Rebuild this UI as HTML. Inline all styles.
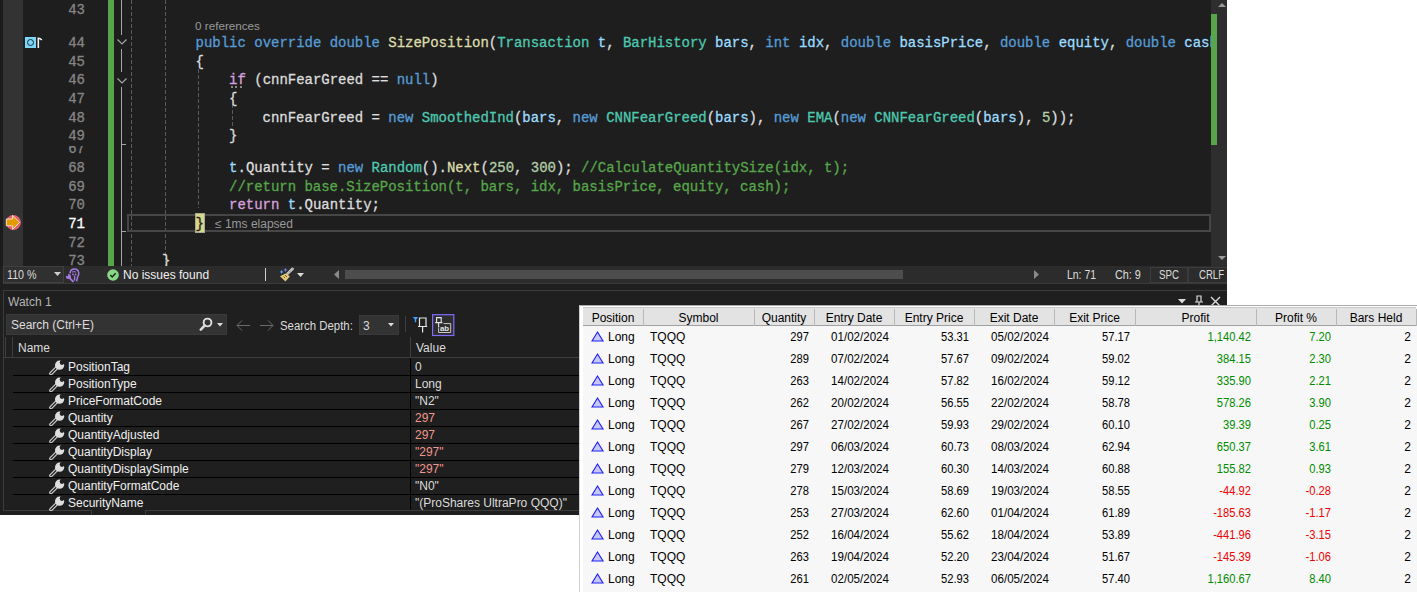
<!DOCTYPE html>
<html><head><meta charset="utf-8"><style>
*{margin:0;padding:0;box-sizing:border-box}
html,body{width:1417px;height:592px;overflow:hidden;background:#fff;position:relative}
.a{position:absolute}
.mono{font-family:"Liberation Mono",monospace;font-size:14px;letter-spacing:-0.025px;white-space:pre;line-height:18px;-webkit-text-stroke:0.3px currentColor}
.ui{font-family:"Liberation Sans",sans-serif;font-size:12px;white-space:pre;line-height:14px}
</style></head><body>

<div class="a" style="left:0;top:0;width:1227px;height:515px;background:#1f1f1f"></div>
<div class="a" style="left:0;top:0;width:1211px;height:266px;background:#1e1e1e;overflow:hidden">
<div class="a" style="left:0;top:0;width:3px;height:266px;background:#1b1b1b"></div>
<div class="a" style="left:3px;top:0;width:20px;height:266px;background:#333333"></div>
<div class="a" style="left:108px;top:0;width:6px;height:266px;background:#57a64a"></div>
<div class="a" style="left:121px;top:0px;width:1px;height:35px;background:#a5a5a5"></div>
<div class="a" style="left:121px;top:49px;width:1px;height:23px;background:#a5a5a5"></div>
<div class="a" style="left:121px;top:87px;width:1px;height:179px;background:#a5a5a5"></div>
<div class="a" style="left:121px;top:144px;width:5px;height:1px;background:#a5a5a5"></div>
<div class="a" style="left:121px;top:231px;width:5px;height:1px;background:#a5a5a5"></div>
<svg class="a" style="left:116px;top:38px" width="12" height="8"><path d="M1.5 1.5 L6 6 L10.5 1.5" stroke="#a5a5a5" stroke-width="1.2" fill="none"/></svg>
<svg class="a" style="left:116px;top:77px" width="12" height="8"><path d="M1.5 1.5 L6 6 L10.5 1.5" stroke="#a5a5a5" stroke-width="1.2" fill="none"/></svg>
<div class="a" style="left:131px;top:0px;width:1px;height:266px;background:repeating-linear-gradient(to bottom,#5a5a5a 0 4px,transparent 4px 6px)"></div>
<div class="a" style="left:165px;top:0px;width:1px;height:266px;background:repeating-linear-gradient(to bottom,#5a5a5a 0 4px,transparent 4px 6px)"></div>
<div class="a" style="left:198px;top:69px;width:1px;height:78px;background:repeating-linear-gradient(to bottom,#5a5a5a 0 4px,transparent 4px 6px)"></div>
<div class="a" style="left:198px;top:147px;width:1px;height:61px;background:repeating-linear-gradient(to bottom,#5a5a5a 0 4px,transparent 4px 6px)"></div>
<div class="a" style="left:232px;top:104px;width:1px;height:24px;background:repeating-linear-gradient(to bottom,#5a5a5a 0 4px,transparent 4px 6px)"></div>
<div class="a mono" style="left:0;width:85px;text-align:right;top:1px;color:#858585;font-weight:normal">43</div>
<div class="a mono" style="left:0;width:85px;text-align:right;top:34.0px;color:#858585;font-weight:normal">44</div>
<div class="a mono" style="left:0;width:85px;text-align:right;top:52.67px;color:#858585;font-weight:normal">45</div>
<div class="a mono" style="left:0;width:85px;text-align:right;top:71.34px;color:#858585;font-weight:normal">46</div>
<div class="a mono" style="left:0;width:85px;text-align:right;top:90.01px;color:#858585;font-weight:normal">47</div>
<div class="a mono" style="left:0;width:85px;text-align:right;top:108.68px;color:#858585;font-weight:normal">48</div>
<div class="a mono" style="left:0;width:85px;text-align:right;top:127.35000000000002px;color:#858585;font-weight:normal">49</div>
<div class="a" style="left:0;top:146px;width:100px;height:20px;overflow:hidden"><div class="a mono" style="left:0;width:85px;text-align:right;top:-5.670000000000016px;color:#858585">67</div></div>
<div class="a mono" style="left:0;width:85px;text-align:right;top:159.0px;color:#858585;font-weight:normal">68</div>
<div class="a mono" style="left:0;width:85px;text-align:right;top:177.67000000000002px;color:#858585;font-weight:normal">69</div>
<div class="a mono" style="left:0;width:85px;text-align:right;top:196.34px;color:#858585;font-weight:normal">70</div>
<div class="a mono" style="left:0;width:85px;text-align:right;top:215.01px;color:#FFFFFF;font-weight:normal">71</div>
<div class="a mono" style="left:0;width:85px;text-align:right;top:233.68px;color:#858585;font-weight:normal">72</div>
<div class="a mono" style="left:0;width:85px;text-align:right;top:252.35000000000002px;color:#858585;font-weight:normal">73</div>
<div class="a" style="left:23px;top:0;width:1188px;height:147px;background:transparent"></div>
<div class="a ui" style="left:195px;top:19px;color:#999999;font-size:11.7px">0 references</div>
<div class="a mono" style="left:195.6px;top:34.0px"><span style="color:#569CD6">public</span><span style="color:#DCDCDC"> </span><span style="color:#569CD6">override</span><span style="color:#DCDCDC"> </span><span style="color:#569CD6">double</span><span style="color:#DCDCDC"> </span><span style="color:#DCDCAA">SizePosition</span><span style="color:#DCDCDC">(</span><span style="color:#4EC9B0">Transaction</span><span style="color:#DCDCDC"> </span><span style="color:#9CDCFE">t</span><span style="color:#DCDCDC">, </span><span style="color:#4EC9B0">BarHistory</span><span style="color:#DCDCDC"> </span><span style="color:#9CDCFE">bars</span><span style="color:#DCDCDC">, </span><span style="color:#569CD6">int</span><span style="color:#DCDCDC"> </span><span style="color:#9CDCFE">idx</span><span style="color:#DCDCDC">, </span><span style="color:#569CD6">double</span><span style="color:#DCDCDC"> </span><span style="color:#9CDCFE">basisPrice</span><span style="color:#DCDCDC">, </span><span style="color:#569CD6">double</span><span style="color:#DCDCDC"> </span><span style="color:#9CDCFE">equity</span><span style="color:#DCDCDC">, </span><span style="color:#569CD6">double</span><span style="color:#DCDCDC"> </span><span style="color:#9CDCFE">cash</span></div>
<div class="a mono" style="left:195.6px;top:52.67px"><span style="color:#DCDCDC">{</span></div>
<div class="a mono" style="left:229.1px;top:71.34px"><span style="color:#D8A0DF">if</span><span style="color:#DCDCDC"> (</span><span style="color:#DCDCDC">cnnFearGreed</span><span style="color:#DCDCDC"> == </span><span style="color:#569CD6">null</span><span style="color:#DCDCDC">)</span></div>
<div class="a mono" style="left:229.1px;top:90.01px"><span style="color:#DCDCDC">{</span></div>
<div class="a mono" style="left:262.6px;top:108.68px"><span style="color:#DCDCDC">cnnFearGreed</span><span style="color:#DCDCDC"> = </span><span style="color:#569CD6">new</span><span style="color:#DCDCDC"> </span><span style="color:#4EC9B0">SmoothedInd</span><span style="color:#DCDCDC">(</span><span style="color:#9CDCFE">bars</span><span style="color:#DCDCDC">, </span><span style="color:#569CD6">new</span><span style="color:#DCDCDC"> </span><span style="color:#4EC9B0">CNNFearGreed</span><span style="color:#DCDCDC">(</span><span style="color:#9CDCFE">bars</span><span style="color:#DCDCDC">), </span><span style="color:#569CD6">new</span><span style="color:#DCDCDC"> </span><span style="color:#4EC9B0">EMA</span><span style="color:#DCDCDC">(</span><span style="color:#569CD6">new</span><span style="color:#DCDCDC"> </span><span style="color:#4EC9B0">CNNFearGreed</span><span style="color:#DCDCDC">(</span><span style="color:#9CDCFE">bars</span><span style="color:#DCDCDC">), </span><span style="color:#B5CEA8">5</span><span style="color:#DCDCDC">));</span></div>
<div class="a mono" style="left:229.1px;top:127.35000000000002px"><span style="color:#DCDCDC">}</span></div>
<div class="a mono" style="left:229.1px;top:159.0px"><span style="color:#9CDCFE">t</span><span style="color:#DCDCDC">.</span><span style="color:#DCDCDC">Quantity</span><span style="color:#DCDCDC"> = </span><span style="color:#569CD6">new</span><span style="color:#DCDCDC"> </span><span style="color:#4EC9B0">Random</span><span style="color:#DCDCDC">().</span><span style="color:#DCDCAA">Next</span><span style="color:#DCDCDC">(</span><span style="color:#B5CEA8">250</span><span style="color:#DCDCDC">, </span><span style="color:#B5CEA8">300</span><span style="color:#DCDCDC">); </span><span style="color:#57A64A">//CalculateQuantitySize(idx, t);</span></div>
<div class="a mono" style="left:229.1px;top:177.67000000000002px"><span style="color:#57A64A">//return base.SizePosition(t, bars, idx, basisPrice, equity, cash);</span></div>
<div class="a mono" style="left:229.1px;top:196.34px"><span style="color:#D8A0DF">return</span><span style="color:#DCDCDC"> </span><span style="color:#9CDCFE">t</span><span style="color:#DCDCDC">.</span><span style="color:#DCDCDC">Quantity</span><span style="color:#DCDCDC">;</span></div>
<div class="a mono" style="left:162.1px;top:252.35000000000002px"><span style="color:#DCDCDC">}</span></div>
<div class="a" style="left:230.5px;top:86px;width:2px;height:2px;background:#8a8a8a"></div>
<div class="a" style="left:235px;top:86px;width:2px;height:2px;background:#8a8a8a"></div>
<div class="a" style="left:239.5px;top:86px;width:2px;height:2px;background:#8a8a8a"></div>
<div class="a" style="left:127px;top:213.5px;width:1084px;height:18.5px;border:2px solid #464646"></div>
<div class="a" style="left:195px;top:213px;width:9.5px;height:20px;background:#d6d68c;border:1px solid #a9a996"></div>
<div class="a mono" style="left:195.6px;top:215.01px;color:#1e1e1e">}</div>
<div class="a ui" style="left:215px;top:216.5px;color:#999999">≤ 1ms elapsed</div>
<div class="a" style="left:25px;top:37px;width:11px;height:11px;background:#7dd6fa"></div>
<div class="a" style="left:26.6px;top:38.9px;width:7px;height:7px;border:1.1px solid #1a2a30;border-radius:50%"></div>
<svg class="a" style="left:36px;top:36px" width="7" height="13"><path d="M2.3 12 V2.2 Q4 2 5.8 4" stroke="#f0f0f0" stroke-width="1.6" fill="none"/></svg>
<svg class="a" style="left:5px;top:214px" width="17" height="17"><circle cx="8.4" cy="8.5" r="7.5" fill="#e2606e"/><path d="M1.3 5 H7.6 V1.4 L14.6 8.4 L7.6 15.4 V11.8 H1.3 Z" fill="#e29c00" stroke="#f4e4e4" stroke-width="0.9"/></svg>
</div>
<div class="a" style="left:1211px;top:0;width:16px;height:266px;background:#2e2e2e"></div>
<div class="a" style="left:1211px;top:14px;width:6px;height:131px;background:#57a64a"></div>
<svg class="a" style="left:1217px;top:1px" width="10" height="8"><path d="M1 6 L5 2 L9 6 Z" fill="#999"/></svg>
<svg class="a" style="left:1217px;top:254px" width="10" height="8"><path d="M1 2 L5 6 L9 2 Z" fill="#999"/></svg>
<div class="a" style="left:3px;top:266px;width:1224px;height:18px;background:#2c2c2c"></div>
<div class="a" style="left:3px;top:266px;width:61px;height:17px;background:#303030;border:1px solid #404040"></div>
<div class="a ui" style="left:7px;top:268px;color:#dcdcdc;transform:scaleX(0.89);transform-origin:0 0">110 %</div>
<svg class="a" style="left:54px;top:272px" width="8" height="5"><path d="M0 0 H7 L3.5 4 Z" fill="#cfcfcf"/></svg>
<svg class="a" style="left:65px;top:267px" width="16" height="16"><path d="M5.2 6.5 Q5 2.6 9 2.1 Q13 1.9 13.7 5.6 Q14 8 12.6 10 L11.6 14.4" stroke="#a67be6" stroke-width="1.5" fill="none"/><path d="M7 5.2 Q9 3.9 11 5.2" stroke="#a67be6" stroke-width="1" fill="none"/><circle cx="8" cy="7.4" r="0.9" fill="#a67be6"/><circle cx="10.6" cy="7.4" r="0.9" fill="#a67be6"/><path d="M9.6 8.6 V13.6" stroke="#a67be6" stroke-width="1.4"/><circle cx="3.4" cy="9.6" r="2.5" fill="#a67be6"/><circle cx="2.1" cy="8.2" r="1.1" fill="#2c2c2c"/><path d="M4.2 10.6 L8 14.4" stroke="#a67be6" stroke-width="1.9" stroke-linecap="round"/></svg>
<svg class="a" style="left:107px;top:269px" width="12" height="12"><circle cx="6" cy="6" r="5.8" fill="#87d787"/><path d="M3.3 6 L5.2 7.9 L8.7 4.2" stroke="#1e1e1e" stroke-width="1.4" fill="none"/></svg>
<div class="a ui" style="left:123px;top:268px;color:#f0f0f0">No issues found</div>
<div class="a" style="left:265px;top:268px;width:1px;height:13px;background:#cfcfcf"></div>
<svg class="a" style="left:278px;top:266px" width="18" height="17"><path d="M14.6 2.8 L9.6 7.6" stroke="#cfcfcf" stroke-width="2.6" stroke-linecap="round"/><path d="M14.6 2.8 L9.6 7.6" stroke="#555" stroke-width="0.8" stroke-dasharray="1 1"/><path d="M8.2 7.2 L11.8 10.6 L7.4 15.4 L2 10.2 Z" fill="#e6c87c"/><path d="M5.5 10.5 L7 12 M7 9 L9 11" stroke="#6a5a30" stroke-width="1"/><path d="M3.6 3.8 L4.3 5.2 L5.7 5.9 L4.3 6.6 L3.6 8 L2.9 6.6 L1.5 5.9 L2.9 5.2 Z" fill="#4fa8f0"/><path d="M7.4 1.8 L8.1 3.2 L9.5 3.9 L8.1 4.6 L7.4 6 L6.7 4.6 L5.3 3.9 L6.7 3.2 Z" fill="#7a78e0"/></svg>
<svg class="a" style="left:297px;top:273px" width="8" height="5"><path d="M0 0 H7 L3.5 4 Z" fill="#dcdcdc"/></svg>
<svg class="a" style="left:334px;top:270px" width="6" height="10"><path d="M5 0 V9 L0 4.5 Z" fill="#8a8a8a"/></svg>
<div class="a" style="left:345px;top:270px;width:558px;height:9px;background:#4d4d4d"></div>
<svg class="a" style="left:1034px;top:270px" width="6" height="10"><path d="M0 0 V9 L5 4.5 Z" fill="#8a8a8a"/></svg>
<div class="a ui" style="left:1067px;top:268px;color:#dcdcdc;transform:scaleX(0.87);transform-origin:0 0">Ln: 71</div>
<div class="a ui" style="left:1115px;top:268px;color:#dcdcdc;transform:scaleX(0.9);transform-origin:0 0">Ch: 9</div>
<div class="a" style="left:1150px;top:267px;width:38px;height:16px;border:1px solid #3c3c3c"></div>
<div class="a ui" style="left:1159px;top:268px;color:#dcdcdc;transform:scaleX(0.81);transform-origin:0 0">SPC</div>
<div class="a" style="left:1188px;top:267px;width:39px;height:16px;border:1px solid #3c3c3c;border-right:none"></div>
<div class="a ui" style="left:1199px;top:268px;color:#dcdcdc;transform:scaleX(0.8);transform-origin:0 0">CRLF</div>
<div class="a" style="left:3px;top:283px;width:1224px;height:1px;background:#3a3a3a"></div>
<div class="a" style="left:3px;top:290px;width:1224px;height:221px;border-left:1px solid #3c3c3c;border-top:1px solid #3c3c3c"></div>
<div class="a" style="left:3px;top:510px;width:89px;height:1px;background:#3c3c3c"></div>
<div class="a" style="left:91px;top:510px;width:1px;height:5px;background:#3c3c3c"></div>
<div class="a" style="left:145px;top:510px;width:1px;height:5px;background:#3c3c3c"></div>
<div class="a" style="left:145px;top:510px;width:1082px;height:1px;background:#3c3c3c"></div>
<div class="a ui" style="left:8px;top:295px;color:#b4b4b4">Watch 1</div>
<svg class="a" style="left:1178px;top:299px" width="9" height="6"><path d="M0 0 H8 L4 4.5 Z" fill="#dcdcdc"/></svg>
<svg class="a" style="left:1194px;top:295px" width="10" height="13"><path d="M3 1 H7 V7 H3 Z M1 7 H9 M5 7 V12" stroke="#dcdcdc" stroke-width="1.2" fill="none"/></svg>
<svg class="a" style="left:1210px;top:296px" width="11" height="11"><path d="M1 1 L10 10 M10 1 L1 10" stroke="#dcdcdc" stroke-width="1.4"/></svg>
<div class="a" style="left:6px;top:314px;width:221px;height:21px;background:#333333;border:1px solid #3a3a3a"></div>
<div class="a ui" style="left:11px;top:318px;color:#dcdcdc">Search (Ctrl+E)</div>
<svg class="a" style="left:199px;top:317px" width="15" height="15"><circle cx="8.5" cy="5.5" r="3.9" stroke="#e0e0e0" stroke-width="1.9" fill="none"/><path d="M5.8 8.4 L1.8 12.6" stroke="#dcdcdc" stroke-width="2.6" stroke-linecap="round"/></svg>
<svg class="a" style="left:217px;top:323px" width="7" height="4"><path d="M0 0 H6 L3 3.5 Z" fill="#dcdcdc"/></svg>
<svg class="a" style="left:235px;top:319px" width="16" height="13"><path d="M15 6.5 H2 M7 1.5 L2 6.5 L7 11.5" stroke="#6a6a6a" stroke-width="1" fill="none"/></svg>
<svg class="a" style="left:259px;top:319px" width="16" height="13"><path d="M1 6.5 H14 M9 1.5 L14 6.5 L9 11.5" stroke="#6a6a6a" stroke-width="1" fill="none"/></svg>
<div class="a ui" style="left:280px;top:318.5px;color:#dcdcdc;transform:scaleX(0.95);transform-origin:0 0">Search Depth:</div>
<div class="a" style="left:359px;top:315px;width:40px;height:20px;background:#333333;border:1px solid #3a3a3a"></div>
<div class="a ui" style="left:363px;top:318.5px;color:#dcdcdc">3</div>
<svg class="a" style="left:388px;top:323px" width="7" height="4"><path d="M0 0 H6 L3 3.5 Z" fill="#dcdcdc"/></svg>
<div class="a" style="left:405px;top:316px;width:1px;height:16px;background:#3f3f3f"></div>
<svg class="a" style="left:408px;top:310px" width="52" height="30"><path d="M4.8 7 H10.2 L8.2 9.6 V12.2 H6.8 V9.6 Z" fill="#3ea2ff"/><path d="M11.5 16.5 V8 H18 V16.5 M10 16.5 H19.2 M14.6 16.5 V22.5" stroke="#e6e6e6" stroke-width="1.2" fill="none"/><rect x="24.6" y="4.7" width="21.2" height="20.8" fill="#2d2d2d" stroke="#7f6cff" stroke-width="1.2"/><path d="M28.6 12.6 V7.6 H33.2 V12.6 M27.2 12.6 H34.4 M30.6 12.6 V17.5" stroke="#e6e6e6" stroke-width="1.1" fill="none"/><path d="M30.6 18.2 V22.5 H42.7 V13.6 H35.5" stroke="#c8c8c8" stroke-width="1" fill="none"/><text x="32" y="21.2" font-family="Liberation Sans" font-weight="bold" font-size="7.8" fill="#e6e6e6">ab</text></svg>
<div class="a" style="left:5px;top:337px;width:1px;height:20px;background:#3f3f3f"></div>
<div class="a" style="left:12px;top:337px;width:1px;height:20px;background:#3f3f3f"></div>
<div class="a" style="left:410px;top:337px;width:1px;height:20px;background:#3f3f3f"></div>
<div class="a ui" style="left:18px;top:340.5px;color:#dcdcdc">Name</div>
<div class="a ui" style="left:416px;top:340.5px;color:#dcdcdc">Value</div>
<div class="a" style="left:4px;top:357px;width:1223px;height:1px;background:#3f3f3f"></div>
<svg class="a" style="left:49px;top:358.5px" width="16" height="16"><path d="M2 14.5 L8.5 8" stroke="#d4d4d4" stroke-width="3.6" stroke-linecap="round"/><path d="M2 14.5 L8.5 8" stroke="#1f1f1f" stroke-width="1.3" stroke-linecap="round"/><circle cx="10.6" cy="6.2" r="4.6" fill="#dedede"/><circle cx="13" cy="3.6" r="2.3" fill="#1f1f1f"/></svg>
<div class="a ui" style="left:68px;top:359.5px;color:#f0f0f0">PositionTag</div>
<div class="a ui" style="left:415px;top:359.5px;color:#dcdcdc">0</div>
<div class="a" style="left:13px;top:375.0px;width:1214px;height:1px;background:#000"></div>
<svg class="a" style="left:49px;top:375.5px" width="16" height="16"><path d="M2 14.5 L8.5 8" stroke="#d4d4d4" stroke-width="3.6" stroke-linecap="round"/><path d="M2 14.5 L8.5 8" stroke="#1f1f1f" stroke-width="1.3" stroke-linecap="round"/><circle cx="10.6" cy="6.2" r="4.6" fill="#dedede"/><circle cx="13" cy="3.6" r="2.3" fill="#1f1f1f"/></svg>
<div class="a ui" style="left:68px;top:376.5px;color:#f0f0f0">PositionType</div>
<div class="a ui" style="left:415px;top:376.5px;color:#dcdcdc">Long</div>
<div class="a" style="left:13px;top:392.0px;width:1214px;height:1px;background:#000"></div>
<svg class="a" style="left:49px;top:392.5px" width="16" height="16"><path d="M2 14.5 L8.5 8" stroke="#d4d4d4" stroke-width="3.6" stroke-linecap="round"/><path d="M2 14.5 L8.5 8" stroke="#1f1f1f" stroke-width="1.3" stroke-linecap="round"/><circle cx="10.6" cy="6.2" r="4.6" fill="#dedede"/><circle cx="13" cy="3.6" r="2.3" fill="#1f1f1f"/></svg>
<div class="a ui" style="left:68px;top:393.5px;color:#f0f0f0">PriceFormatCode</div>
<div class="a ui" style="left:415px;top:393.5px;color:#dcdcdc">&quot;N2&quot;</div>
<div class="a" style="left:13px;top:409.0px;width:1214px;height:1px;background:#000"></div>
<svg class="a" style="left:49px;top:409.5px" width="16" height="16"><path d="M2 14.5 L8.5 8" stroke="#d4d4d4" stroke-width="3.6" stroke-linecap="round"/><path d="M2 14.5 L8.5 8" stroke="#1f1f1f" stroke-width="1.3" stroke-linecap="round"/><circle cx="10.6" cy="6.2" r="4.6" fill="#dedede"/><circle cx="13" cy="3.6" r="2.3" fill="#1f1f1f"/></svg>
<div class="a ui" style="left:68px;top:410.5px;color:#f0f0f0">Quantity</div>
<div class="a ui" style="left:415px;top:410.5px;color:#f0978f">297</div>
<div class="a" style="left:13px;top:426.0px;width:1214px;height:1px;background:#000"></div>
<svg class="a" style="left:49px;top:426.5px" width="16" height="16"><path d="M2 14.5 L8.5 8" stroke="#d4d4d4" stroke-width="3.6" stroke-linecap="round"/><path d="M2 14.5 L8.5 8" stroke="#1f1f1f" stroke-width="1.3" stroke-linecap="round"/><circle cx="10.6" cy="6.2" r="4.6" fill="#dedede"/><circle cx="13" cy="3.6" r="2.3" fill="#1f1f1f"/></svg>
<div class="a ui" style="left:68px;top:427.5px;color:#f0f0f0">QuantityAdjusted</div>
<div class="a ui" style="left:415px;top:427.5px;color:#f0978f">297</div>
<div class="a" style="left:13px;top:443.0px;width:1214px;height:1px;background:#000"></div>
<svg class="a" style="left:49px;top:443.5px" width="16" height="16"><path d="M2 14.5 L8.5 8" stroke="#d4d4d4" stroke-width="3.6" stroke-linecap="round"/><path d="M2 14.5 L8.5 8" stroke="#1f1f1f" stroke-width="1.3" stroke-linecap="round"/><circle cx="10.6" cy="6.2" r="4.6" fill="#dedede"/><circle cx="13" cy="3.6" r="2.3" fill="#1f1f1f"/></svg>
<div class="a ui" style="left:68px;top:444.5px;color:#f0f0f0">QuantityDisplay</div>
<div class="a ui" style="left:415px;top:444.5px;color:#f0978f">&quot;297&quot;</div>
<div class="a" style="left:13px;top:460.0px;width:1214px;height:1px;background:#000"></div>
<svg class="a" style="left:49px;top:460.5px" width="16" height="16"><path d="M2 14.5 L8.5 8" stroke="#d4d4d4" stroke-width="3.6" stroke-linecap="round"/><path d="M2 14.5 L8.5 8" stroke="#1f1f1f" stroke-width="1.3" stroke-linecap="round"/><circle cx="10.6" cy="6.2" r="4.6" fill="#dedede"/><circle cx="13" cy="3.6" r="2.3" fill="#1f1f1f"/></svg>
<div class="a ui" style="left:68px;top:461.5px;color:#f0f0f0">QuantityDisplaySimple</div>
<div class="a ui" style="left:415px;top:461.5px;color:#f0978f">&quot;297&quot;</div>
<div class="a" style="left:13px;top:477.0px;width:1214px;height:1px;background:#000"></div>
<svg class="a" style="left:49px;top:477.5px" width="16" height="16"><path d="M2 14.5 L8.5 8" stroke="#d4d4d4" stroke-width="3.6" stroke-linecap="round"/><path d="M2 14.5 L8.5 8" stroke="#1f1f1f" stroke-width="1.3" stroke-linecap="round"/><circle cx="10.6" cy="6.2" r="4.6" fill="#dedede"/><circle cx="13" cy="3.6" r="2.3" fill="#1f1f1f"/></svg>
<div class="a ui" style="left:68px;top:478.5px;color:#f0f0f0">QuantityFormatCode</div>
<div class="a ui" style="left:415px;top:478.5px;color:#dcdcdc">&quot;N0&quot;</div>
<div class="a" style="left:13px;top:494.0px;width:1214px;height:1px;background:#000"></div>
<svg class="a" style="left:49px;top:494.5px" width="16" height="16"><path d="M2 14.5 L8.5 8" stroke="#d4d4d4" stroke-width="3.6" stroke-linecap="round"/><path d="M2 14.5 L8.5 8" stroke="#1f1f1f" stroke-width="1.3" stroke-linecap="round"/><circle cx="10.6" cy="6.2" r="4.6" fill="#dedede"/><circle cx="13" cy="3.6" r="2.3" fill="#1f1f1f"/></svg>
<div class="a ui" style="left:68px;top:495.5px;color:#f0f0f0">SecurityName</div>
<div class="a ui" style="left:415px;top:495.5px;color:#dcdcdc">&quot;(ProShares UltraPro QQQ)&quot;</div>
<div class="a" style="left:410px;top:358px;width:1px;height:152px;background:#000"></div>
<div class="a" style="left:579px;top:305px;width:838px;height:287px;background:#f7f7f7;border-left:1px solid #d0d0d0;border-top:1px solid #a9a9a9"></div>
<div class="a" style="left:580px;top:306px;width:837px;height:2px;background:#ffffff"></div>
<div class="a" style="left:580px;top:306px;width:3px;height:286px;background:#ffffff"></div>
<div class="a" style="left:583px;top:307px;width:833px;height:19px;background:#e3e3e3;border-bottom:1px solid #a0a0a0;border-top:1px solid #c8c8c8"></div>
<div class="a ui" style="left:583px;width:60px;top:310.5px;text-align:center;color:#000">Position</div>
<div class="a" style="left:643px;top:309px;width:1px;height:17px;background:#b8b8b8"></div>
<div class="a ui" style="left:643px;width:111px;top:310.5px;text-align:center;color:#000">Symbol</div>
<div class="a" style="left:754px;top:309px;width:1px;height:17px;background:#b8b8b8"></div>
<div class="a ui" style="left:754px;width:60px;top:310.5px;text-align:center;color:#000">Quantity</div>
<div class="a" style="left:814px;top:309px;width:1px;height:17px;background:#b8b8b8"></div>
<div class="a ui" style="left:814px;width:80px;top:310.5px;text-align:center;color:#000">Entry Date</div>
<div class="a" style="left:894px;top:309px;width:1px;height:17px;background:#b8b8b8"></div>
<div class="a ui" style="left:894px;width:80px;top:310.5px;text-align:center;color:#000">Entry Price</div>
<div class="a" style="left:974px;top:309px;width:1px;height:17px;background:#b8b8b8"></div>
<div class="a ui" style="left:974px;width:80px;top:310.5px;text-align:center;color:#000">Exit Date</div>
<div class="a" style="left:1054px;top:309px;width:1px;height:17px;background:#b8b8b8"></div>
<div class="a ui" style="left:1054px;width:81px;top:310.5px;text-align:center;color:#000">Exit Price</div>
<div class="a" style="left:1135px;top:309px;width:1px;height:17px;background:#b8b8b8"></div>
<div class="a ui" style="left:1135px;width:121px;top:310.5px;text-align:center;color:#000">Profit</div>
<div class="a" style="left:1256px;top:309px;width:1px;height:17px;background:#b8b8b8"></div>
<div class="a ui" style="left:1256px;width:80px;top:310.5px;text-align:center;color:#000">Profit %</div>
<div class="a" style="left:1336px;top:309px;width:1px;height:17px;background:#b8b8b8"></div>
<div class="a ui" style="left:1336px;width:80px;top:310.5px;text-align:center;color:#000">Bars Held</div>
<div class="a" style="left:1416px;top:309px;width:1px;height:17px;background:#b8b8b8"></div>
<svg class="a" style="left:591px;top:330px" width="14" height="12"><path d="M1 11 L6.5 2 L12 11 Z" fill="#c8c8f8" stroke="#2020f8" stroke-width="1.15"/></svg>
<div class="a ui" style="left:608px;top:329.5px;color:#000">Long</div>
<div class="a ui" style="left:650px;top:329.5px;color:#000">TQQQ</div>
<div class="a ui" style="left:689px;width:120px;text-align:right;top:329.5px;color:#000;transform:scaleX(0.93);transform-origin:100% 0">297</div>
<div class="a ui" style="left:769px;width:120px;text-align:right;top:329.5px;color:#000;transform:scaleX(0.965);transform-origin:100% 0">01/02/2024</div>
<div class="a ui" style="left:848.5px;width:120px;text-align:right;top:329.5px;color:#000;transform:scaleX(0.93);transform-origin:100% 0">53.31</div>
<div class="a ui" style="left:929px;width:120px;text-align:right;top:329.5px;color:#000;transform:scaleX(0.965);transform-origin:100% 0">05/02/2024</div>
<div class="a ui" style="left:1009.5px;width:120px;text-align:right;top:329.5px;color:#000;transform:scaleX(0.93);transform-origin:100% 0">57.17</div>
<div class="a ui" style="left:1131px;width:120px;text-align:right;top:329.5px;color:#008a00;transform:scaleX(0.93);transform-origin:100% 0">1,140.42</div>
<div class="a ui" style="left:1211px;width:120px;text-align:right;top:329.5px;color:#008a00;transform:scaleX(0.93);transform-origin:100% 0">7.20</div>
<div class="a ui" style="left:1291px;width:120px;text-align:right;top:329.5px;color:#000">2</div>
<svg class="a" style="left:591px;top:352px" width="14" height="12"><path d="M1 11 L6.5 2 L12 11 Z" fill="#c8c8f8" stroke="#2020f8" stroke-width="1.15"/></svg>
<div class="a ui" style="left:608px;top:351.5px;color:#000">Long</div>
<div class="a ui" style="left:650px;top:351.5px;color:#000">TQQQ</div>
<div class="a ui" style="left:689px;width:120px;text-align:right;top:351.5px;color:#000;transform:scaleX(0.93);transform-origin:100% 0">289</div>
<div class="a ui" style="left:769px;width:120px;text-align:right;top:351.5px;color:#000;transform:scaleX(0.965);transform-origin:100% 0">07/02/2024</div>
<div class="a ui" style="left:848.5px;width:120px;text-align:right;top:351.5px;color:#000;transform:scaleX(0.93);transform-origin:100% 0">57.67</div>
<div class="a ui" style="left:929px;width:120px;text-align:right;top:351.5px;color:#000;transform:scaleX(0.965);transform-origin:100% 0">09/02/2024</div>
<div class="a ui" style="left:1009.5px;width:120px;text-align:right;top:351.5px;color:#000;transform:scaleX(0.93);transform-origin:100% 0">59.02</div>
<div class="a ui" style="left:1131px;width:120px;text-align:right;top:351.5px;color:#008a00;transform:scaleX(0.93);transform-origin:100% 0">384.15</div>
<div class="a ui" style="left:1211px;width:120px;text-align:right;top:351.5px;color:#008a00;transform:scaleX(0.93);transform-origin:100% 0">2.30</div>
<div class="a ui" style="left:1291px;width:120px;text-align:right;top:351.5px;color:#000">2</div>
<svg class="a" style="left:591px;top:374px" width="14" height="12"><path d="M1 11 L6.5 2 L12 11 Z" fill="#c8c8f8" stroke="#2020f8" stroke-width="1.15"/></svg>
<div class="a ui" style="left:608px;top:373.5px;color:#000">Long</div>
<div class="a ui" style="left:650px;top:373.5px;color:#000">TQQQ</div>
<div class="a ui" style="left:689px;width:120px;text-align:right;top:373.5px;color:#000;transform:scaleX(0.93);transform-origin:100% 0">263</div>
<div class="a ui" style="left:769px;width:120px;text-align:right;top:373.5px;color:#000;transform:scaleX(0.965);transform-origin:100% 0">14/02/2024</div>
<div class="a ui" style="left:848.5px;width:120px;text-align:right;top:373.5px;color:#000;transform:scaleX(0.93);transform-origin:100% 0">57.82</div>
<div class="a ui" style="left:929px;width:120px;text-align:right;top:373.5px;color:#000;transform:scaleX(0.965);transform-origin:100% 0">16/02/2024</div>
<div class="a ui" style="left:1009.5px;width:120px;text-align:right;top:373.5px;color:#000;transform:scaleX(0.93);transform-origin:100% 0">59.12</div>
<div class="a ui" style="left:1131px;width:120px;text-align:right;top:373.5px;color:#008a00;transform:scaleX(0.93);transform-origin:100% 0">335.90</div>
<div class="a ui" style="left:1211px;width:120px;text-align:right;top:373.5px;color:#008a00;transform:scaleX(0.93);transform-origin:100% 0">2.21</div>
<div class="a ui" style="left:1291px;width:120px;text-align:right;top:373.5px;color:#000">2</div>
<svg class="a" style="left:591px;top:396px" width="14" height="12"><path d="M1 11 L6.5 2 L12 11 Z" fill="#c8c8f8" stroke="#2020f8" stroke-width="1.15"/></svg>
<div class="a ui" style="left:608px;top:395.5px;color:#000">Long</div>
<div class="a ui" style="left:650px;top:395.5px;color:#000">TQQQ</div>
<div class="a ui" style="left:689px;width:120px;text-align:right;top:395.5px;color:#000;transform:scaleX(0.93);transform-origin:100% 0">262</div>
<div class="a ui" style="left:769px;width:120px;text-align:right;top:395.5px;color:#000;transform:scaleX(0.965);transform-origin:100% 0">20/02/2024</div>
<div class="a ui" style="left:848.5px;width:120px;text-align:right;top:395.5px;color:#000;transform:scaleX(0.93);transform-origin:100% 0">56.55</div>
<div class="a ui" style="left:929px;width:120px;text-align:right;top:395.5px;color:#000;transform:scaleX(0.965);transform-origin:100% 0">22/02/2024</div>
<div class="a ui" style="left:1009.5px;width:120px;text-align:right;top:395.5px;color:#000;transform:scaleX(0.93);transform-origin:100% 0">58.78</div>
<div class="a ui" style="left:1131px;width:120px;text-align:right;top:395.5px;color:#008a00;transform:scaleX(0.93);transform-origin:100% 0">578.26</div>
<div class="a ui" style="left:1211px;width:120px;text-align:right;top:395.5px;color:#008a00;transform:scaleX(0.93);transform-origin:100% 0">3.90</div>
<div class="a ui" style="left:1291px;width:120px;text-align:right;top:395.5px;color:#000">2</div>
<svg class="a" style="left:591px;top:418px" width="14" height="12"><path d="M1 11 L6.5 2 L12 11 Z" fill="#c8c8f8" stroke="#2020f8" stroke-width="1.15"/></svg>
<div class="a ui" style="left:608px;top:417.5px;color:#000">Long</div>
<div class="a ui" style="left:650px;top:417.5px;color:#000">TQQQ</div>
<div class="a ui" style="left:689px;width:120px;text-align:right;top:417.5px;color:#000;transform:scaleX(0.93);transform-origin:100% 0">267</div>
<div class="a ui" style="left:769px;width:120px;text-align:right;top:417.5px;color:#000;transform:scaleX(0.965);transform-origin:100% 0">27/02/2024</div>
<div class="a ui" style="left:848.5px;width:120px;text-align:right;top:417.5px;color:#000;transform:scaleX(0.93);transform-origin:100% 0">59.93</div>
<div class="a ui" style="left:929px;width:120px;text-align:right;top:417.5px;color:#000;transform:scaleX(0.965);transform-origin:100% 0">29/02/2024</div>
<div class="a ui" style="left:1009.5px;width:120px;text-align:right;top:417.5px;color:#000;transform:scaleX(0.93);transform-origin:100% 0">60.10</div>
<div class="a ui" style="left:1131px;width:120px;text-align:right;top:417.5px;color:#008a00;transform:scaleX(0.93);transform-origin:100% 0">39.39</div>
<div class="a ui" style="left:1211px;width:120px;text-align:right;top:417.5px;color:#008a00;transform:scaleX(0.93);transform-origin:100% 0">0.25</div>
<div class="a ui" style="left:1291px;width:120px;text-align:right;top:417.5px;color:#000">2</div>
<svg class="a" style="left:591px;top:440px" width="14" height="12"><path d="M1 11 L6.5 2 L12 11 Z" fill="#c8c8f8" stroke="#2020f8" stroke-width="1.15"/></svg>
<div class="a ui" style="left:608px;top:439.5px;color:#000">Long</div>
<div class="a ui" style="left:650px;top:439.5px;color:#000">TQQQ</div>
<div class="a ui" style="left:689px;width:120px;text-align:right;top:439.5px;color:#000;transform:scaleX(0.93);transform-origin:100% 0">297</div>
<div class="a ui" style="left:769px;width:120px;text-align:right;top:439.5px;color:#000;transform:scaleX(0.965);transform-origin:100% 0">06/03/2024</div>
<div class="a ui" style="left:848.5px;width:120px;text-align:right;top:439.5px;color:#000;transform:scaleX(0.93);transform-origin:100% 0">60.73</div>
<div class="a ui" style="left:929px;width:120px;text-align:right;top:439.5px;color:#000;transform:scaleX(0.965);transform-origin:100% 0">08/03/2024</div>
<div class="a ui" style="left:1009.5px;width:120px;text-align:right;top:439.5px;color:#000;transform:scaleX(0.93);transform-origin:100% 0">62.94</div>
<div class="a ui" style="left:1131px;width:120px;text-align:right;top:439.5px;color:#008a00;transform:scaleX(0.93);transform-origin:100% 0">650.37</div>
<div class="a ui" style="left:1211px;width:120px;text-align:right;top:439.5px;color:#008a00;transform:scaleX(0.93);transform-origin:100% 0">3.61</div>
<div class="a ui" style="left:1291px;width:120px;text-align:right;top:439.5px;color:#000">2</div>
<svg class="a" style="left:591px;top:462px" width="14" height="12"><path d="M1 11 L6.5 2 L12 11 Z" fill="#c8c8f8" stroke="#2020f8" stroke-width="1.15"/></svg>
<div class="a ui" style="left:608px;top:461.5px;color:#000">Long</div>
<div class="a ui" style="left:650px;top:461.5px;color:#000">TQQQ</div>
<div class="a ui" style="left:689px;width:120px;text-align:right;top:461.5px;color:#000;transform:scaleX(0.93);transform-origin:100% 0">279</div>
<div class="a ui" style="left:769px;width:120px;text-align:right;top:461.5px;color:#000;transform:scaleX(0.965);transform-origin:100% 0">12/03/2024</div>
<div class="a ui" style="left:848.5px;width:120px;text-align:right;top:461.5px;color:#000;transform:scaleX(0.93);transform-origin:100% 0">60.30</div>
<div class="a ui" style="left:929px;width:120px;text-align:right;top:461.5px;color:#000;transform:scaleX(0.965);transform-origin:100% 0">14/03/2024</div>
<div class="a ui" style="left:1009.5px;width:120px;text-align:right;top:461.5px;color:#000;transform:scaleX(0.93);transform-origin:100% 0">60.88</div>
<div class="a ui" style="left:1131px;width:120px;text-align:right;top:461.5px;color:#008a00;transform:scaleX(0.93);transform-origin:100% 0">155.82</div>
<div class="a ui" style="left:1211px;width:120px;text-align:right;top:461.5px;color:#008a00;transform:scaleX(0.93);transform-origin:100% 0">0.93</div>
<div class="a ui" style="left:1291px;width:120px;text-align:right;top:461.5px;color:#000">2</div>
<svg class="a" style="left:591px;top:484px" width="14" height="12"><path d="M1 11 L6.5 2 L12 11 Z" fill="#c8c8f8" stroke="#2020f8" stroke-width="1.15"/></svg>
<div class="a ui" style="left:608px;top:483.5px;color:#000">Long</div>
<div class="a ui" style="left:650px;top:483.5px;color:#000">TQQQ</div>
<div class="a ui" style="left:689px;width:120px;text-align:right;top:483.5px;color:#000;transform:scaleX(0.93);transform-origin:100% 0">278</div>
<div class="a ui" style="left:769px;width:120px;text-align:right;top:483.5px;color:#000;transform:scaleX(0.965);transform-origin:100% 0">15/03/2024</div>
<div class="a ui" style="left:848.5px;width:120px;text-align:right;top:483.5px;color:#000;transform:scaleX(0.93);transform-origin:100% 0">58.69</div>
<div class="a ui" style="left:929px;width:120px;text-align:right;top:483.5px;color:#000;transform:scaleX(0.965);transform-origin:100% 0">19/03/2024</div>
<div class="a ui" style="left:1009.5px;width:120px;text-align:right;top:483.5px;color:#000;transform:scaleX(0.93);transform-origin:100% 0">58.55</div>
<div class="a ui" style="left:1131px;width:120px;text-align:right;top:483.5px;color:#f00000;transform:scaleX(0.93);transform-origin:100% 0">-44.92</div>
<div class="a ui" style="left:1211px;width:120px;text-align:right;top:483.5px;color:#f00000;transform:scaleX(0.93);transform-origin:100% 0">-0.28</div>
<div class="a ui" style="left:1291px;width:120px;text-align:right;top:483.5px;color:#000">2</div>
<svg class="a" style="left:591px;top:506px" width="14" height="12"><path d="M1 11 L6.5 2 L12 11 Z" fill="#c8c8f8" stroke="#2020f8" stroke-width="1.15"/></svg>
<div class="a ui" style="left:608px;top:505.5px;color:#000">Long</div>
<div class="a ui" style="left:650px;top:505.5px;color:#000">TQQQ</div>
<div class="a ui" style="left:689px;width:120px;text-align:right;top:505.5px;color:#000;transform:scaleX(0.93);transform-origin:100% 0">253</div>
<div class="a ui" style="left:769px;width:120px;text-align:right;top:505.5px;color:#000;transform:scaleX(0.965);transform-origin:100% 0">27/03/2024</div>
<div class="a ui" style="left:848.5px;width:120px;text-align:right;top:505.5px;color:#000;transform:scaleX(0.93);transform-origin:100% 0">62.60</div>
<div class="a ui" style="left:929px;width:120px;text-align:right;top:505.5px;color:#000;transform:scaleX(0.965);transform-origin:100% 0">01/04/2024</div>
<div class="a ui" style="left:1009.5px;width:120px;text-align:right;top:505.5px;color:#000;transform:scaleX(0.93);transform-origin:100% 0">61.89</div>
<div class="a ui" style="left:1131px;width:120px;text-align:right;top:505.5px;color:#f00000;transform:scaleX(0.93);transform-origin:100% 0">-185.63</div>
<div class="a ui" style="left:1211px;width:120px;text-align:right;top:505.5px;color:#f00000;transform:scaleX(0.93);transform-origin:100% 0">-1.17</div>
<div class="a ui" style="left:1291px;width:120px;text-align:right;top:505.5px;color:#000">2</div>
<svg class="a" style="left:591px;top:528px" width="14" height="12"><path d="M1 11 L6.5 2 L12 11 Z" fill="#c8c8f8" stroke="#2020f8" stroke-width="1.15"/></svg>
<div class="a ui" style="left:608px;top:527.5px;color:#000">Long</div>
<div class="a ui" style="left:650px;top:527.5px;color:#000">TQQQ</div>
<div class="a ui" style="left:689px;width:120px;text-align:right;top:527.5px;color:#000;transform:scaleX(0.93);transform-origin:100% 0">252</div>
<div class="a ui" style="left:769px;width:120px;text-align:right;top:527.5px;color:#000;transform:scaleX(0.965);transform-origin:100% 0">16/04/2024</div>
<div class="a ui" style="left:848.5px;width:120px;text-align:right;top:527.5px;color:#000;transform:scaleX(0.93);transform-origin:100% 0">55.62</div>
<div class="a ui" style="left:929px;width:120px;text-align:right;top:527.5px;color:#000;transform:scaleX(0.965);transform-origin:100% 0">18/04/2024</div>
<div class="a ui" style="left:1009.5px;width:120px;text-align:right;top:527.5px;color:#000;transform:scaleX(0.93);transform-origin:100% 0">53.89</div>
<div class="a ui" style="left:1131px;width:120px;text-align:right;top:527.5px;color:#f00000;transform:scaleX(0.93);transform-origin:100% 0">-441.96</div>
<div class="a ui" style="left:1211px;width:120px;text-align:right;top:527.5px;color:#f00000;transform:scaleX(0.93);transform-origin:100% 0">-3.15</div>
<div class="a ui" style="left:1291px;width:120px;text-align:right;top:527.5px;color:#000">2</div>
<svg class="a" style="left:591px;top:550px" width="14" height="12"><path d="M1 11 L6.5 2 L12 11 Z" fill="#c8c8f8" stroke="#2020f8" stroke-width="1.15"/></svg>
<div class="a ui" style="left:608px;top:549.5px;color:#000">Long</div>
<div class="a ui" style="left:650px;top:549.5px;color:#000">TQQQ</div>
<div class="a ui" style="left:689px;width:120px;text-align:right;top:549.5px;color:#000;transform:scaleX(0.93);transform-origin:100% 0">263</div>
<div class="a ui" style="left:769px;width:120px;text-align:right;top:549.5px;color:#000;transform:scaleX(0.965);transform-origin:100% 0">19/04/2024</div>
<div class="a ui" style="left:848.5px;width:120px;text-align:right;top:549.5px;color:#000;transform:scaleX(0.93);transform-origin:100% 0">52.20</div>
<div class="a ui" style="left:929px;width:120px;text-align:right;top:549.5px;color:#000;transform:scaleX(0.965);transform-origin:100% 0">23/04/2024</div>
<div class="a ui" style="left:1009.5px;width:120px;text-align:right;top:549.5px;color:#000;transform:scaleX(0.93);transform-origin:100% 0">51.67</div>
<div class="a ui" style="left:1131px;width:120px;text-align:right;top:549.5px;color:#f00000;transform:scaleX(0.93);transform-origin:100% 0">-145.39</div>
<div class="a ui" style="left:1211px;width:120px;text-align:right;top:549.5px;color:#f00000;transform:scaleX(0.93);transform-origin:100% 0">-1.06</div>
<div class="a ui" style="left:1291px;width:120px;text-align:right;top:549.5px;color:#000">2</div>
<svg class="a" style="left:591px;top:572px" width="14" height="12"><path d="M1 11 L6.5 2 L12 11 Z" fill="#c8c8f8" stroke="#2020f8" stroke-width="1.15"/></svg>
<div class="a ui" style="left:608px;top:571.5px;color:#000">Long</div>
<div class="a ui" style="left:650px;top:571.5px;color:#000">TQQQ</div>
<div class="a ui" style="left:689px;width:120px;text-align:right;top:571.5px;color:#000;transform:scaleX(0.93);transform-origin:100% 0">261</div>
<div class="a ui" style="left:769px;width:120px;text-align:right;top:571.5px;color:#000;transform:scaleX(0.965);transform-origin:100% 0">02/05/2024</div>
<div class="a ui" style="left:848.5px;width:120px;text-align:right;top:571.5px;color:#000;transform:scaleX(0.93);transform-origin:100% 0">52.93</div>
<div class="a ui" style="left:929px;width:120px;text-align:right;top:571.5px;color:#000;transform:scaleX(0.965);transform-origin:100% 0">06/05/2024</div>
<div class="a ui" style="left:1009.5px;width:120px;text-align:right;top:571.5px;color:#000;transform:scaleX(0.93);transform-origin:100% 0">57.40</div>
<div class="a ui" style="left:1131px;width:120px;text-align:right;top:571.5px;color:#008a00;transform:scaleX(0.93);transform-origin:100% 0">1,160.67</div>
<div class="a ui" style="left:1211px;width:120px;text-align:right;top:571.5px;color:#008a00;transform:scaleX(0.93);transform-origin:100% 0">8.40</div>
<div class="a ui" style="left:1291px;width:120px;text-align:right;top:571.5px;color:#000">2</div>
</body></html>
